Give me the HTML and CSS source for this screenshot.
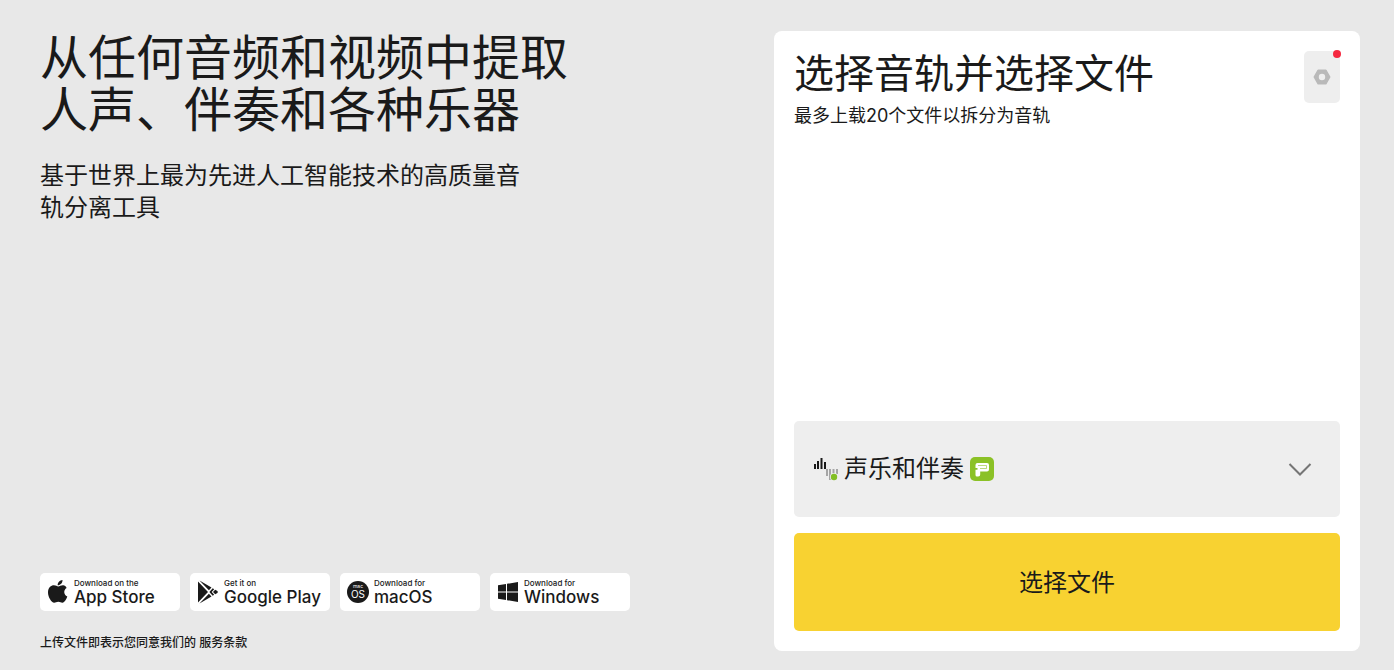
FILE: index.html
```html
<!DOCTYPE html>
<html lang="zh-CN">
<head>
<meta charset="utf-8">
<meta name="viewport" content="width=device-width, initial-scale=1">
<title>从任何音频和视频中提取人声</title>
<link rel="stylesheet" href="styles.css">
</head>
<body>
<main class="page">
  <section class="intro">
    <h1 class="intro-title">从任何音频和视频中提取人声、伴奏和各种乐器</h1>
    <p class="intro-text">基于世界上最为先进人工智能技术的高质量音轨分离工具</p>
    <nav class="stores">
      <a class="store" href="#appstore">
        <svg class="store-icon" viewBox="0 0 24 26" aria-hidden="true"><path d="M16.500 1c.2 2.900-2.200 5.400-4.800 5.300C11.400 3.700 13.900 1.200 16.500 1zM20.600 9.100c-3.300 2-3.100 6.800.7 8.400-.8 2.300-2.700 6-4.800 6.200-1.600.1-2.100-1-4.200-1-2 0-2.600 1-4.100 1C5.500 23.600 2 18.300 2 13.500c0-4.800 3-7.200 5.900-7.200 1.900 0 3.300 1.200 4.400 1.200 1.100 0 2.900-1.400 5-1.200 1.300.1 2.600.7 3.300 2.800z"/></svg>
        <span class="store-label"><small>Download on the</small><span>App Store</span></span>
      </a>
      <a class="store" href="#googleplay">
        <svg class="store-icon" viewBox="0 0 24 26" aria-hidden="true"><path d="M2 2.500v21L12 13zM3.500 1.500l12 7-2.600 2.700zM3.500 24.500l12-7-2.600-2.700zM14 12.200l2.700-2.900 1.500 1-2.500 2.700 2.500 2.700-1.500 1-2.700-2.900-.5-.8zM19.200 10.800l2.200 1.300q.9.900 0 1.800l-2.200 1.300L17 13z"/></svg>
        <span class="store-label"><small>Get it on</small><span>Google Play</span></span>
      </a>
      <a class="store" href="#macos">
        <svg class="store-icon" viewBox="0 0 24 26" aria-hidden="true"><circle cx="12" cy="13" r="11"/><text class="mac-small" x="12" y="9">mac</text><text class="mac-os" x="12" y="19">OS</text></svg>
        <span class="store-label"><small>Download for</small><span>macOS</span></span>
      </a>
      <a class="store" href="#windows">
        <svg class="store-icon" viewBox="0 0 24 26" aria-hidden="true"><path d="M2 6.200l8-1.200v7.400H2zM11 4.800L22 3v9.400H11zM2 13.500h8V21l-8-1.200zM11 13.500h11V23l-11-1.800z"/></svg>
        <span class="store-label"><small>Download for</small><span>Windows</span></span>
      </a>
    </nav>
    <p class="terms">上传文件即表示您同意我们的 <a href="#terms">服务条款</a></p>
  </section>

  <section class="card">
    <header class="card-head">
      <div>
        <h2 class="card-title">选择音轨并选择文件</h2>
        <p class="card-text">最多上载20个文件以拆分为音轨</p>
      </div>
      <button class="settings" type="button" aria-label="设置">
        <svg width="18" height="16" viewBox="0 0 18 16" aria-hidden="true"><path fill="#b9b9b9" fill-rule="evenodd" d="M5.300.4h7.400q.6 0 .9.500l3.700 6.500q.3.600 0 1.200l-3.700 6.500q-.3.500-.9.500H5.300q-.6 0-.9-.5L.7 8.600q-.3-.6 0-1.200L4.400.9q.3-.5.900-.5zM9 4.800a3.200 3.200 0 1 0 0 6.400 3.200 3.200 0 0 0 0-6.400z"/></svg>
        <span class="dot"></span>
      </button>
    </header>
    <button class="picker" type="button" aria-haspopup="listbox">
      <svg width="24" height="24" viewBox="0 0 24 24" aria-hidden="true">
        <path fill="#1a1a1a" d="M0 7h2v5H0zM3 4h2v8H3zM6.500 1h2v11h-2zM10 5h2v7h-2z"/>
        <path fill="#a5a5a5" d="M12 12h2v7h-2zM15 12h2v11h-2zM18.500 12h2v5h-2zM22 12h2v5h-2z"/>
        <circle cx="20" cy="20" r="4" fill="#eee"/><circle cx="20" cy="20" r="3.200" fill="#82bf24"/>
      </svg>
      <span class="picker-label">声乐和伴奏</span>
      <svg width="24" height="24" viewBox="0 0 24 24" aria-hidden="true">
        <rect width="24" height="24" rx="5" fill="#8bc126"/>
        <path fill="#fff" d="M7.500 6H17q2 0 2 2v4.500q0 2-2 2h-6.800v3q0 2-2 2H7q-1.500 0-1.500-1.500v-5.300h2V11h-2V8q0-2 2-2z"/>
        <path fill="none" stroke="#8bc126" stroke-width=".6" d="M8 8.500h8.500v3H10"/>
      </svg>
      <svg class="chevron" width="24" height="24" viewBox="0 0 24 24" aria-hidden="true"><path fill="none" stroke="#757575" stroke-width="2" d="M1.500 7L12 17.500 22.500 7"/></svg>
    </button>
    <button class="choose" type="button">选择文件</button>
  </section>
</main>
</body>
</html>
```
FILE: styles.css
```css
* { box-sizing: border-box; }
body {
  margin: 0;
  background: #e8e8e8;
  color: #1a1a1a;
  font-family: Inter, "Noto Sans CJK SC", sans-serif;
}
h1, h2, p { margin: 0; font-weight: 400; }
a { color: inherit; text-decoration: none; }
button {
  border: 0;
  color: inherit;
  font: inherit;
  cursor: pointer;
}
.page {
  display: grid;
  grid-template-columns: minmax(0, 1fr) 44.4%;
  gap: 32px;
  min-height: 100vh;
  padding: 31px 34px 19px 40px;
}
.intro { display: flex; flex-direction: column; padding-top: 1px; }
.intro-title {
  max-width: 540px;
  font-size: 48px;
  line-height: 52px;
}
.intro-text {
  max-width: 490px;
  margin-top: 24px;
  font-size: 24px;
  line-height: 32px;
}
.stores {
  display: flex;
  flex-wrap: wrap;
  gap: 10px;
  margin-top: auto;
}
.store {
  display: flex;
  align-items: center;
  gap: 4px;
  width: 140px;
  height: 38px;
  padding-left: 6px;
  border-radius: 5px;
  background: #fff;
  white-space: nowrap;
}
.store-icon { flex: none; width: 24px; height: 26px; fill: #1a1a1a; }
.store-label {
  display: flex;
  flex-direction: column;
  font-size: 17px;
  line-height: 18px;
  font-weight: 500;
}
.store-label small { font-size: 8px; line-height: 10px; }
.mac-small, .mac-os { fill: #fff; text-anchor: middle; }
.mac-small { font-size: 5px; }
.mac-os { font-size: 10px; }
.terms {
  margin-top: 24px;
  font-size: 12px;
  line-height: 16px;
  font-weight: 500;
}
.card {
  display: flex;
  flex-direction: column;
  padding: 20px;
  border-radius: 8px;
  background: #fff;
}
.card-head {
  display: flex;
  align-items: flex-start;
  justify-content: space-between;
  margin-bottom: auto;
}
.card-title { font-size: 40px; line-height: 46px; }
.card-text { margin-top: 7px; font-size: 18px; line-height: 24px; }
.settings {
  position: relative;
  display: flex;
  align-items: center;
  justify-content: center;
  width: 36px;
  height: 52px;
  padding: 0;
  border-radius: 5px;
  background: #eee;
}
.dot {
  position: absolute;
  top: -1px;
  right: -1px;
  width: 8px;
  height: 8px;
  border-radius: 50%;
  background: #f5283f;
}
.picker {
  display: flex;
  align-items: center;
  gap: 6px;
  height: 96px;
  padding: 0 28px 0 20px;
  border-radius: 5px;
  background: #eee;
  font-size: 24px;
}
.picker-label { line-height: 28px; }
.chevron { margin-left: auto; }
.choose {
  height: 98px;
  margin-top: 16px;
  padding: 0 0 3px;
  border-radius: 5px;
  background: #f8d231;
  font-size: 24px;
}
```
